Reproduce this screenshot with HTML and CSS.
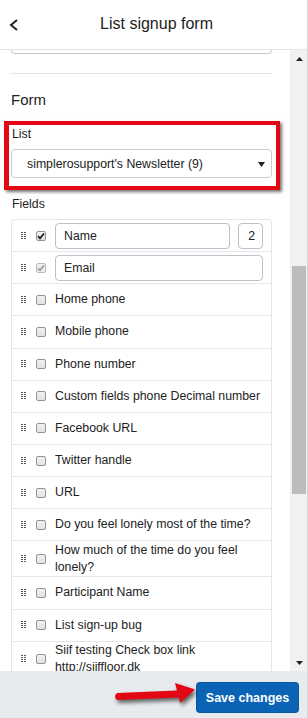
FILE: index.html
```html
<!DOCTYPE html>
<html>
<head>
<meta charset="utf-8">
<link rel="stylesheet" href="styles.css">
</head>
<body>
<div class="app">
  <header class="topbar">
    <svg class="back" width="10" height="12" viewBox="0 0 10 12"><polyline points="8,1 2,6 8,11" fill="none" stroke="#222" stroke-width="2"/></svg>
    <div class="title">List signup form</div>
  </header>
  <div class="main">
    <div class="viewport">
      <div class="content">
        <div class="prev-input"></div>
        <div class="sep"></div>
        <h2 class="section">Form</h2>
        <div class="group highlighted">
          <div class="label">List</div>
          <div class="select">
            <span class="select-text">simplerosupport's Newsletter (9)</span>
            <svg class="caret" width="7" height="5" viewBox="0 0 7 5"><polygon points="0,0 7,0 3.5,5" fill="#222"/></svg>
          </div>
        </div>
        <div class="label fields-label">Fields</div>
        <div class="list">
          <div class="row">
            <span class="handle"><svg width="5" height="8" viewBox="0 0 5 8" shape-rendering="crispEdges"><g fill="#555"><rect x="0" y="0" width="2" height="1"/><rect x="3" y="0" width="2" height="1"/><rect x="0" y="2" width="2" height="1"/><rect x="3" y="2" width="2" height="1"/><rect x="0" y="4" width="2" height="1"/><rect x="3" y="4" width="2" height="1"/><rect x="0" y="6" width="2" height="1"/><rect x="3" y="6" width="2" height="1"/></g></svg></span>
            <span class="check checked"><svg width="8" height="8" viewBox="0 0 8 8"><polyline points="1,4.2 3,6.3 7,1.5" fill="none" stroke="#222" stroke-width="1.8"/></svg></span>
            <div class="inputs">
              <div class="text-input grow">Name</div>
              <div class="text-input num">2</div>
            </div>
          </div>
          <div class="row">
            <span class="handle"><svg width="5" height="8" viewBox="0 0 5 8" shape-rendering="crispEdges"><g fill="#555"><rect x="0" y="0" width="2" height="1"/><rect x="3" y="0" width="2" height="1"/><rect x="0" y="2" width="2" height="1"/><rect x="3" y="2" width="2" height="1"/><rect x="0" y="4" width="2" height="1"/><rect x="3" y="4" width="2" height="1"/><rect x="0" y="6" width="2" height="1"/><rect x="3" y="6" width="2" height="1"/></g></svg></span>
            <span class="check checked disabled"><svg width="8" height="8" viewBox="0 0 8 8"><polyline points="1,4.2 3,6.3 7,1.5" fill="none" stroke="#999" stroke-width="1.6"/></svg></span>
            <div class="inputs">
              <div class="text-input grow">Email</div>
            </div>
          </div>
          <div class="row"><span class="handle"><svg width="5" height="8" viewBox="0 0 5 8" shape-rendering="crispEdges"><g fill="#555"><rect x="0" y="0" width="2" height="1"/><rect x="3" y="0" width="2" height="1"/><rect x="0" y="2" width="2" height="1"/><rect x="3" y="2" width="2" height="1"/><rect x="0" y="4" width="2" height="1"/><rect x="3" y="4" width="2" height="1"/><rect x="0" y="6" width="2" height="1"/><rect x="3" y="6" width="2" height="1"/></g></svg></span><span class="check"></span><span class="field-name">Home phone</span></div>
          <div class="row"><span class="handle"><svg width="5" height="8" viewBox="0 0 5 8" shape-rendering="crispEdges"><g fill="#555"><rect x="0" y="0" width="2" height="1"/><rect x="3" y="0" width="2" height="1"/><rect x="0" y="2" width="2" height="1"/><rect x="3" y="2" width="2" height="1"/><rect x="0" y="4" width="2" height="1"/><rect x="3" y="4" width="2" height="1"/><rect x="0" y="6" width="2" height="1"/><rect x="3" y="6" width="2" height="1"/></g></svg></span><span class="check"></span><span class="field-name">Mobile phone</span></div>
          <div class="row"><span class="handle"><svg width="5" height="8" viewBox="0 0 5 8" shape-rendering="crispEdges"><g fill="#555"><rect x="0" y="0" width="2" height="1"/><rect x="3" y="0" width="2" height="1"/><rect x="0" y="2" width="2" height="1"/><rect x="3" y="2" width="2" height="1"/><rect x="0" y="4" width="2" height="1"/><rect x="3" y="4" width="2" height="1"/><rect x="0" y="6" width="2" height="1"/><rect x="3" y="6" width="2" height="1"/></g></svg></span><span class="check"></span><span class="field-name">Phone number</span></div>
          <div class="row"><span class="handle"><svg width="5" height="8" viewBox="0 0 5 8" shape-rendering="crispEdges"><g fill="#555"><rect x="0" y="0" width="2" height="1"/><rect x="3" y="0" width="2" height="1"/><rect x="0" y="2" width="2" height="1"/><rect x="3" y="2" width="2" height="1"/><rect x="0" y="4" width="2" height="1"/><rect x="3" y="4" width="2" height="1"/><rect x="0" y="6" width="2" height="1"/><rect x="3" y="6" width="2" height="1"/></g></svg></span><span class="check"></span><span class="field-name">Custom fields phone Decimal number</span></div>
          <div class="row"><span class="handle"><svg width="5" height="8" viewBox="0 0 5 8" shape-rendering="crispEdges"><g fill="#555"><rect x="0" y="0" width="2" height="1"/><rect x="3" y="0" width="2" height="1"/><rect x="0" y="2" width="2" height="1"/><rect x="3" y="2" width="2" height="1"/><rect x="0" y="4" width="2" height="1"/><rect x="3" y="4" width="2" height="1"/><rect x="0" y="6" width="2" height="1"/><rect x="3" y="6" width="2" height="1"/></g></svg></span><span class="check"></span><span class="field-name">Facebook URL</span></div>
          <div class="row"><span class="handle"><svg width="5" height="8" viewBox="0 0 5 8" shape-rendering="crispEdges"><g fill="#555"><rect x="0" y="0" width="2" height="1"/><rect x="3" y="0" width="2" height="1"/><rect x="0" y="2" width="2" height="1"/><rect x="3" y="2" width="2" height="1"/><rect x="0" y="4" width="2" height="1"/><rect x="3" y="4" width="2" height="1"/><rect x="0" y="6" width="2" height="1"/><rect x="3" y="6" width="2" height="1"/></g></svg></span><span class="check"></span><span class="field-name">Twitter handle</span></div>
          <div class="row"><span class="handle"><svg width="5" height="8" viewBox="0 0 5 8" shape-rendering="crispEdges"><g fill="#555"><rect x="0" y="0" width="2" height="1"/><rect x="3" y="0" width="2" height="1"/><rect x="0" y="2" width="2" height="1"/><rect x="3" y="2" width="2" height="1"/><rect x="0" y="4" width="2" height="1"/><rect x="3" y="4" width="2" height="1"/><rect x="0" y="6" width="2" height="1"/><rect x="3" y="6" width="2" height="1"/></g></svg></span><span class="check"></span><span class="field-name">URL</span></div>
          <div class="row"><span class="handle"><svg width="5" height="8" viewBox="0 0 5 8" shape-rendering="crispEdges"><g fill="#555"><rect x="0" y="0" width="2" height="1"/><rect x="3" y="0" width="2" height="1"/><rect x="0" y="2" width="2" height="1"/><rect x="3" y="2" width="2" height="1"/><rect x="0" y="4" width="2" height="1"/><rect x="3" y="4" width="2" height="1"/><rect x="0" y="6" width="2" height="1"/><rect x="3" y="6" width="2" height="1"/></g></svg></span><span class="check"></span><span class="field-name">Do you feel lonely most of the time?</span></div>
          <div class="row"><span class="handle"><svg width="5" height="8" viewBox="0 0 5 8" shape-rendering="crispEdges"><g fill="#555"><rect x="0" y="0" width="2" height="1"/><rect x="3" y="0" width="2" height="1"/><rect x="0" y="2" width="2" height="1"/><rect x="3" y="2" width="2" height="1"/><rect x="0" y="4" width="2" height="1"/><rect x="3" y="4" width="2" height="1"/><rect x="0" y="6" width="2" height="1"/><rect x="3" y="6" width="2" height="1"/></g></svg></span><span class="check"></span><span class="field-name">How much of the time do you feel lonely?</span></div>
          <div class="row"><span class="handle"><svg width="5" height="8" viewBox="0 0 5 8" shape-rendering="crispEdges"><g fill="#555"><rect x="0" y="0" width="2" height="1"/><rect x="3" y="0" width="2" height="1"/><rect x="0" y="2" width="2" height="1"/><rect x="3" y="2" width="2" height="1"/><rect x="0" y="4" width="2" height="1"/><rect x="3" y="4" width="2" height="1"/><rect x="0" y="6" width="2" height="1"/><rect x="3" y="6" width="2" height="1"/></g></svg></span><span class="check"></span><span class="field-name">Participant Name</span></div>
          <div class="row"><span class="handle"><svg width="5" height="8" viewBox="0 0 5 8" shape-rendering="crispEdges"><g fill="#555"><rect x="0" y="0" width="2" height="1"/><rect x="3" y="0" width="2" height="1"/><rect x="0" y="2" width="2" height="1"/><rect x="3" y="2" width="2" height="1"/><rect x="0" y="4" width="2" height="1"/><rect x="3" y="4" width="2" height="1"/><rect x="0" y="6" width="2" height="1"/><rect x="3" y="6" width="2" height="1"/></g></svg></span><span class="check"></span><span class="field-name">List sign-up bug</span></div>
          <div class="row"><span class="handle"><svg width="5" height="8" viewBox="0 0 5 8" shape-rendering="crispEdges"><g fill="#555"><rect x="0" y="0" width="2" height="1"/><rect x="3" y="0" width="2" height="1"/><rect x="0" y="2" width="2" height="1"/><rect x="3" y="2" width="2" height="1"/><rect x="0" y="4" width="2" height="1"/><rect x="3" y="4" width="2" height="1"/><rect x="0" y="6" width="2" height="1"/><rect x="3" y="6" width="2" height="1"/></g></svg></span><span class="check"></span><span class="field-name">Siif testing Check box link http://siiffloor.dk</span></div>
        </div>
      </div>
    </div>
    <div class="scrollbar">
      <div class="sb-btn"><svg width="7" height="4" viewBox="0 0 7 4"><polygon points="0,4 7,4 3.5,0" fill="#222"/></svg></div>
      <div class="sb-track"><div class="sb-thumb"></div></div>
      <div class="sb-btn"><svg width="7" height="4" viewBox="0 0 7 4"><polygon points="0,0 7,0 3.5,4" fill="#222"/></svg></div>
    </div>
  </div>
  <footer class="footer">
    <svg class="arrow" width="90" height="28" viewBox="0 0 90 28"><path d="M7,13 L67,10.5 L65,3 L85,9.5 L70,23 L69,17.5 L7,20 Q3,16.5 7,13 Z" fill="#e30613"/></svg>
    <button class="save">Save changes</button>
  </footer>
</div>
</body>
</html>
```
FILE: styles.css
```css
* { box-sizing: border-box; }
html, body { margin: 0; padding: 0; }
body {
  font-family: "Liberation Sans", Arial, sans-serif;
  color: #222;
  background: #fff;
}
.app {
  width: 308px;
  height: 718px;
  display: flex;
  flex-direction: column;
  border-right: 1px solid #d4d6d9;
  overflow: hidden;
}
.topbar {
  height: 50px;
  flex: 0 0 50px;
  border-bottom: 1px solid #e3e5e8;
  display: flex;
  align-items: center;
  position: relative;
}
.back {
  margin-left: 9px;
  flex: 0 0 auto;
}
.title {
  flex: 1;
  text-align: center;
  font-size: 16px;
  color: #222;
  padding-right: 13px;
  padding-bottom: 1px;
}
.main {
  flex: 1;
  display: flex;
  min-height: 0;
}
.viewport {
  flex: 1;
  overflow: hidden;
  position: relative;
}
.content {
  margin-top: -30px;
  padding: 0 18px 0 11px;
}
.prev-input {
  height: 34px;
  border: 1px solid #bfc5cb;
  border-radius: 4px;
}
.sep {
  margin-top: 19px;
  height: 1px;
  background: #e3e5e8;
}
.section {
  margin: 17px 0 0 0;
  font-size: 15px;
  line-height: 18px;
  font-weight: normal;
  color: #222;
}
.group {
  margin-top: 17px;
  position: relative;
}
.highlighted::after {
  content: "";
  position: absolute;
  top: -5px;
  left: -7px;
  right: -8px;
  bottom: -12px;
  border: 4px solid #e30613;
  border-left-width: 5px;
  box-shadow: 2px 2px 3px rgba(0,0,0,0.55);
  pointer-events: none;
}
.label {
  font-size: 12.3px;
  line-height: 16px;
  margin-bottom: 7px;
  padding-left: 1px;
}
.select {
  height: 29px;
  border: 1px solid #c8cdd2;
  border-radius: 4px;
  display: flex;
  align-items: center;
  justify-content: space-between;
  padding: 0 6px 0 15px;
  font-size: 12.3px;
}
.caret { margin-top: 1px; }
.fields-label { margin-top: 18px; }
.list {
  border: 1px solid #e4e6e9;
  border-radius: 3px 3px 0 0;
}
.row {
  display: flex;
  align-items: center;
  min-height: 32.15px;
  border-bottom: 1px solid #e4e6e9;
  padding: 0 8px 0 9px;
}
.handle {
  width: 5px;
  height: 8px;
  display: flex;
  flex: 0 0 5px;
}
.check {
  width: 10px;
  height: 10px;
  flex: 0 0 10px;
  margin-left: 10px;
  margin-right: 9px;
  border: 1px solid #929292;
  border-radius: 2px;
  background: linear-gradient(#f2f2f2, #e2e2e2);
  display: flex;
  align-items: center;
  justify-content: center;
}
.check.disabled {
  border-color: #b8b8b8;
  background: #eeeeee;
}
.inputs {
  flex: 1;
  display: flex;
  gap: 8px;
}
.text-input {
  height: 26px;
  border: 1px solid #bcc2c8;
  border-radius: 4px;
  font-size: 12.3px;
  display: flex;
  align-items: center;
  padding-left: 8px;
}
.text-input.grow { flex: 1; }
.text-input.num {
  width: 25px;
  flex: 0 0 25px;
  justify-content: flex-end;
  padding: 0 7px 0 0;
}
.field-name {
  flex: 1;
  min-width: 0;
  font-size: 12.3px;
  line-height: 17px;
  padding: 0.5px 0;
}
.scrollbar {
  width: 17px;
  flex: 0 0 17px;
  background: #f1f1f1;
  display: flex;
  flex-direction: column;
}
.sb-btn {
  height: 17px;
  flex: 0 0 17px;
  display: flex;
  align-items: center;
  justify-content: center;
  padding-left: 1px;
}
.sb-track {
  flex: 1;
  padding: 199px 1px 0 2px;
}
.sb-thumb {
  height: 228px;
  background: #bcbcbc;
}
.footer {
  height: 47px;
  flex: 0 0 47px;
  background: #e8ebee;
  display: flex;
  justify-content: flex-end;
  align-items: flex-start;
  padding: 12px 9px 0 0;
  position: relative;
}
.arrow {
  position: absolute;
  left: 110px;
  top: 9px;
  filter: drop-shadow(2px 3px 2px rgba(0,0,0,0.6));
}
.save {
  width: 101px;
  height: 29px;
  border: none;
  border-radius: 3px;
  background: #0a63b5;
  color: #fff;
  font-family: "Liberation Sans", Arial, sans-serif;
  font-weight: bold;
  font-size: 12.5px;
  padding: 0;
  box-shadow: 0 0 0 1px #0a58a0;
}
```
